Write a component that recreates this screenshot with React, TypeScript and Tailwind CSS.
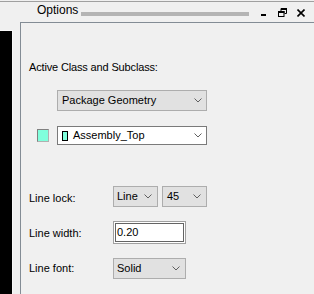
import React from "react";

const Chevron = () => (
  <svg width="8" height="5" viewBox="0 0 8 5" className="shrink-0">
    <path d="M0.5 0.5 L4 4 L7.5 0.5" fill="none" stroke="#606060" strokeWidth="1" />
  </svg>
);

const Combo = ({
  label,
  width,
  pl = "pl-[3px]",
}: {
  label: string;
  width: string;
  pl?: string;
}) => (
  <div
    className={`${width} h-[21px] bg-[#e1e1e1] border border-[#adadad] flex items-center justify-between ${pl} pr-[5px]`}
  >
    <span className="leading-[13px]">{label}</span>
    <Chevron />
  </div>
);

const Row = ({ label, offset, children }: { label: string; offset: string; children: React.ReactNode }) => (
  <div className="flex items-start">
    <span className={`w-[84px] leading-[13px] ${offset}`}>{label}</span>
    {children}
  </div>
);

export default function App() {
  return (
    <div className="w-[314px] h-[294px] bg-[#f0f0f0] overflow-hidden flex flex-col font-['Liberation_Sans',Arial,sans-serif] text-[11px] text-black">
      <div className="mt-px h-px bg-[#a0a0a0]" />

      {/* title bar */}
      <div className="h-[20px] flex items-start pl-[37px]">
        <span className="w-[44px] mt-px text-[12px] leading-[14px]">Options</span>
        <div className="mt-[10px] h-[4px] w-[168px] bg-[#b4b4b4]" />
        <div className="ml-[12px] mt-[12px] w-[5px] h-[2px] bg-black" />
        <svg width="9" height="9" viewBox="0 0 9 9" className="ml-[12px] mt-[6px]">
          <path d="M3 0.5 H8.5 V5.5 H6.5 M3 0.5 V3" fill="none" stroke="#000" strokeWidth="1" />
          <rect x="3" y="0" width="6" height="2" fill="#000" />
          <rect x="0.5" y="3.5" width="5.5" height="5" fill="none" stroke="#000" strokeWidth="1" />
          <rect x="0" y="3" width="6.5" height="2" fill="#000" />
        </svg>
        <svg width="8" height="8" viewBox="0 0 8 8" className="ml-[10px] mt-[7px]">
          <path d="M0.5 0.5 L7.5 7.5 M7.5 0.5 L0.5 7.5" stroke="#000" strokeWidth="1.6" />
        </svg>
      </div>

      <div className="flex flex-1">
        <div className="w-[20px] pt-[8px]">
          <div className="w-[13px] h-full bg-black border-t border-r border-[#f8f8f8]" />
        </div>

        <div className="flex-1 border-l border-t border-[#838c95] pl-2 pt-[38px] flex flex-col">
          <span className="leading-[13px] tracking-[-0.15px]">Active Class and Subclass:</span>

          <div className="mt-[16px] ml-[28px] w-[150px] h-[21px] bg-[#e1e1e1] border border-[#adadad] flex items-center justify-between pl-[4px] pr-[4px]">
            <span className="leading-[13px]">Package Geometry</span>
            <Chevron />
          </div>

          <div className="mt-[15px] flex items-center">
            <div className="ml-[8px] w-[12px] h-[13px] bg-[#80ffdc] border border-t-[#808080] border-l-[#808080] border-b-[#b0b0b0] border-r-[#b0b0b0]" />
            <div className="ml-[8px] w-[150px] h-[19px] bg-white border border-[#7a7a7a] flex items-center pl-[4px] pr-[4px]">
              <div className="w-[6px] h-[10px] bg-[#80ffdc] border border-black" />
              <span className="ml-[5px] leading-[13px] flex-1">Assembly_Top</span>
              <Chevron />
            </div>
          </div>

          <div className="mt-[41px]">
            <Row label="Line lock:" offset="mt-[6px]">
              <Combo label="Line" width="w-[45px]" />
              <div className="ml-[4px]">
                <Combo label="45" width="w-[45px]" pl="pl-[4px]" />
              </div>
            </Row>
          </div>

          <div className="mt-[14px]">
            <Row label="Line width:" offset="mt-[6px]">
              <div className="w-[73px] h-[23px] border border-[#a0a0a0] bg-white p-px">
                <div className="h-full border border-[#646464] bg-white flex items-center pl-px">
                  <span className="leading-[13px]">0.20</span>
                </div>
              </div>
            </Row>
          </div>

          <div className="mt-[14px]">
            <Row label="Line font:" offset="mt-[4px]">
              <Combo label="Solid" width="w-[73px]" />
            </Row>
          </div>
        </div>
      </div>
    </div>
  );
}
